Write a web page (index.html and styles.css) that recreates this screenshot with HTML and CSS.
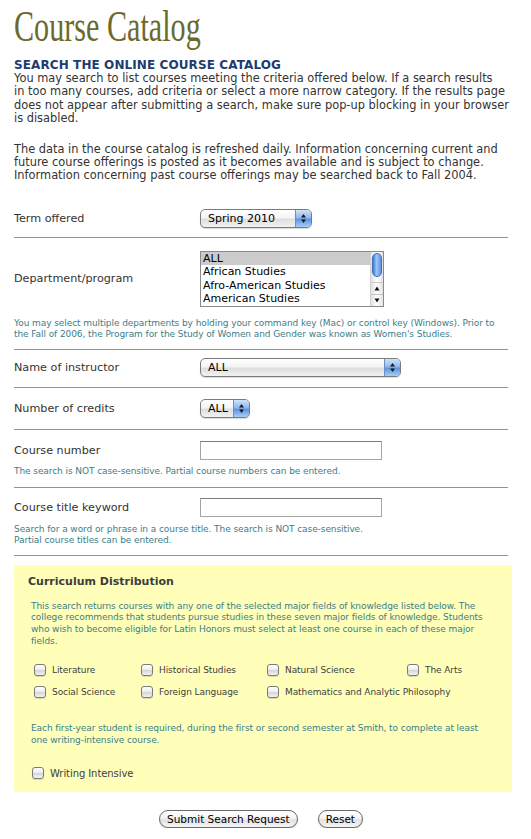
FILE: index.html
```html
<!DOCTYPE html>
<html>
<head>
<meta charset="utf-8">
<title>Course Catalog</title>
<link rel="stylesheet" href="styles.css">
</head>
<body>
<div class="page">
  <h1 class="title">Course Catalog</h1>
  <h2 class="subhead">SEARCH THE ONLINE COURSE CATALOG</h2>
  <p class="intro">You may search to list courses meeting the criteria offered below. If a search results<br>in too many courses, add criteria or select a more narrow category. If the results page<br>does not appear after submitting a search, make sure pop-up blocking in your browser<br>is disabled.</p>
  <p class="intro intro-2">The data in the course catalog is refreshed daily. Information concerning current and<br>future course offerings is posted as it becomes available and is subject to change.<br>Information concerning past course offerings may be searched back to Fall 2004.</p>

  <form class="search">
    <div class="row row-term">
      <label class="label">Term offered</label>
      <span class="popup popup-term">
        <span class="popup-text">Spring 2010</span>
        <span class="popup-cap"><svg width="7" height="11" viewBox="0 0 7 11"><path d="M3.5 1 L6 4.5 H1 Z M3.5 10 L6 6.5 H1 Z" fill="#1a1a1a"/></svg></span>
      </span>
    </div>

    <div class="row row-dept">
      <div class="field">
        <label class="label">Department/program</label>
        <div class="listbox">
          <ul class="options">
            <li class="selected">ALL</li>
            <li>African Studies</li>
            <li>Afro-American Studies</li>
            <li>American Studies</li>
          </ul>
          <div class="scrollbar">
            <span class="thumb"></span>
            <span class="track"></span>
            <span class="arrow"><svg width="6" height="5" viewBox="0 0 6 5"><path d="M3 0.5 L5.5 4.5 H0.5 Z" fill="#111"/></svg></span>
            <span class="arrow"><svg width="6" height="5" viewBox="0 0 6 5"><path d="M3 4.5 L5.5 0.5 H0.5 Z" fill="#111"/></svg></span>
          </div>
        </div>
      </div>
      <p class="note note-dept">You may select multiple departments by holding your command key (Mac) or control key (Windows). Prior to<br>the Fall of 2006, the Program for the Study of Women and Gender was known as Women's Studies.</p>
    </div>

    <div class="row row-instr">
      <label class="label">Name of instructor</label>
      <span class="popup popup-instr">
        <span class="popup-text">ALL</span>
        <span class="popup-cap"><svg width="7" height="11" viewBox="0 0 7 11"><path d="M3.5 1 L6 4.5 H1 Z M3.5 10 L6 6.5 H1 Z" fill="#1a1a1a"/></svg></span>
      </span>
    </div>

    <div class="row row-credits">
      <label class="label">Number of credits</label>
      <span class="popup popup-credits">
        <span class="popup-text">ALL</span>
        <span class="popup-cap"><svg width="7" height="11" viewBox="0 0 7 11"><path d="M3.5 1 L6 4.5 H1 Z M3.5 10 L6 6.5 H1 Z" fill="#1a1a1a"/></svg></span>
      </span>
    </div>

    <div class="row row-num">
      <div class="field">
        <label class="label">Course number</label>
        <input class="textbox" type="text">
      </div>
      <p class="note note-num">The search is NOT case-sensitive. Partial course numbers can be entered.</p>
    </div>

    <div class="row row-kw">
      <div class="field">
        <label class="label">Course title keyword</label>
        <input class="textbox" type="text">
      </div>
      <p class="note note-kw">Search for a word or phrase in a course title. The search is NOT case-sensitive.<br>Partial course titles can be entered.</p>
    </div>

    <div class="distribution">
      <h3 class="dist-title">Curriculum Distribution</h3>
      <p class="note dist-note">This search returns courses with any one of the selected major fields of knowledge listed below. The<br>college recommends that students pursue studies in these seven major fields of knowledge. Students<br>who wish to become eligible for Latin Honors must select at least one course in each of these major<br>fields.</p>
      <div class="fields">
        <label class="check"><input type="checkbox"><span>Literature</span></label>
        <label class="check"><input type="checkbox"><span>Historical Studies</span></label>
        <label class="check"><input type="checkbox"><span>Natural Science</span></label>
        <label class="check"><input type="checkbox"><span>The Arts</span></label>
        <label class="check"><input type="checkbox"><span>Social Science</span></label>
        <label class="check"><input type="checkbox"><span>Foreign Language</span></label>
        <label class="check check-wide"><input type="checkbox"><span>Mathematics and Analytic Philosophy</span></label>
      </div>
      <p class="note dist-note dist-note-2">Each first-year student is required, during the first or second semester at Smith, to complete at least<br>one writing-intensive course.</p>
      <label class="check check-wi"><input type="checkbox"><span>Writing Intensive</span></label>
    </div>

    <div class="buttons">
      <button type="button" class="btn">Submit Search Request</button>
      <button type="reset" class="btn">Reset</button>
    </div>
  </form>
</div>
</body>
</html>
```
FILE: styles.css
```css
html, body {
  margin: 0;
  padding: 0;
  background: #ffffff;
}

body {
  font-family: "DejaVu Sans", Verdana, sans-serif;
  color: #333333;
}

.page {
  padding: 0 23px 0 14px;
}

.title {
  margin: 0;
  padding-top: 2px;
  font-family: "Liberation Serif", "Times New Roman", serif;
  font-weight: normal;
  font-size: 45px;
  line-height: 48px;
  color: #6b6a2c;
  transform: scaleX(0.67);
  transform-origin: left center;
  white-space: nowrap;
}

.subhead {
  margin: 8px 0 0;
  font-size: 12px;
  line-height: 14px;
  font-weight: bold;
  color: #1f3c6e;
  letter-spacing: 0.1px;
}

.intro {
  margin: 0 -12px 0 0;
  font-size: 11.4px;
  line-height: 13.4px;
  color: #333333;
  white-space: nowrap;
}

.intro-2 {
  margin-top: 17px;
}

.search {
  margin-top: 17px;
}

.row {
  border-bottom: 1px solid #c3911e;
  display: grid;
  grid-template-columns: 186px auto;
  align-items: center;
  justify-content: start;
}

.row-dept, .row-num, .row-kw {
  display: block;
}

.field {
  display: grid;
  grid-template-columns: 186px auto;
  align-items: center;
  justify-content: start;
}

.label {
  font-size: 11.2px;
  color: #333333;
}

.row-term { padding: 9px 0 9px; }
.row-dept { padding: 13px 0 8px; }
.row-instr { padding: 8px 0 10px; }
.row-credits { padding: 11px 0 11px; }
.row-num { padding: 11px 0 9px; }
.row-kw { padding: 10px 0 8px; }

/* Aqua-style popup menus */
.popup {
  display: inline-flex;
  height: 17px;
  border: 1px solid #7b7b7b;
  border-radius: 5px;
  overflow: hidden;
  background: linear-gradient(#ffffff 0%, #f4f4f4 45%, #dedede 55%, #f2f2f2 100%);
  box-shadow: 0 1px 1px rgba(0,0,0,0.15);
  font-size: 11px;
  color: #000;
}

.popup-text {
  flex: 1;
  display: flex;
  align-items: center;
  padding-left: 7px;
  white-space: nowrap;
}

.popup-cap {
  width: 15px;
  display: flex;
  align-items: center;
  justify-content: center;
  border-left: 1px solid #6f8fbf;
  background: linear-gradient(#cfe3fb 0%, #8fb8ec 45%, #5c95df 55%, #a8cdf7 100%);
}

.popup-term { width: 110px; }
.popup-instr { width: 199px; }
.popup-credits { width: 48px; }

/* List box */
.listbox {
  width: 182px;
  height: 54px;
  border: 1px solid #8a8a8a;
  display: flex;
  background: #fff;
}

.options {
  list-style: none;
  margin: 0;
  padding: 0;
  flex: 1;
  font-size: 11px;
  color: #000;
}

.options li {
  height: 13.5px;
  line-height: 13.5px;
  padding-left: 2px;
  white-space: nowrap;
}

.options li.selected {
  background: #cbcbcb;
}

.scrollbar {
  width: 12px;
  display: flex;
  flex-direction: column;
  background: linear-gradient(90deg, #e2e2e2, #ffffff 50%, #e2e2e2);
  border-left: 1px solid #d0d0d0;
}

.thumb {
  margin: 1px 1px 0;
  height: 22px;
  flex: none;
  border-radius: 5px;
  border: 1px solid #3f6fb8;
  background: linear-gradient(90deg, #3d7ad7, #9cc6f6 45%, #5b95e2);
}

.track {
  flex: 1;
}

.arrow {
  height: 11px;
  flex: none;
  display: flex;
  align-items: center;
  justify-content: center;
  border-top: 1px solid #c9c9c9;
}

.note {
  margin: 0;
  font-size: 9px;
  letter-spacing: -0.08px;
  line-height: 11.6px;
  color: #3a7e89;
  white-space: nowrap;
}

.note-dept { margin-top: 11px; }
.note-num { margin-top: 6px; }
.note-kw { margin-top: 7px; }

.textbox {
  box-sizing: border-box;
  width: 182px;
  height: 19px;
  margin: 0;
  border: 1px solid #a6a6a6;
  border-top-color: #7c7c7c;
  background: #fff;
  padding: 0 3px;
}

/* Yellow distribution box */
.distribution {
  margin: 9px -4px 0 0;
  background: #ffffb9;
  padding: 10px 14px 13px;
}

.dist-title {
  margin: 0;
  font-size: 11px;
  line-height: 14px;
  font-weight: bold;
  color: #3d3d3d;
}

.dist-note {
  margin: 12px 0 0 3px;
}

.fields {
  margin-top: 17px;
  padding-left: 6px;
  display: grid;
  grid-template-columns: 107px 126px 140px auto;
  row-gap: 10px;
}

.check {
  display: flex;
  align-items: center;
  gap: 6px;
  font-size: 9px;
  letter-spacing: -0.08px;
  color: #404040;
  white-space: nowrap;
}

.check-wide {
  grid-column: span 2;
}

.check input {
  appearance: none;
  -webkit-appearance: none;
  margin: 0;
  width: 12px;
  height: 12px;
  border: 1px solid #7a7a7a;
  border-radius: 3px;
  background: linear-gradient(#ffffff, #ececec 50%, #d6d6d6 55%, #f3f3f3);
  box-shadow: 0 1px 1px rgba(0,0,0,0.15);
}

.dist-note-2 {
  margin-top: 25px;
}

.check-wi {
  margin-top: 21px;
  padding-left: 4px;
  font-size: 10px;
}

.buttons {
  display: flex;
  justify-content: center;
  gap: 20px;
  padding: 18px 0 0;
}

.btn {
  font-family: "DejaVu Sans", "Lucida Grande", sans-serif;
  font-size: 10.5px;
  color: #000;
  height: 18px;
  padding: 0 7px;
  border: 1px solid #6a6a6a;
  border-radius: 9px;
  background: linear-gradient(#ffffff 0%, #f5f5f5 45%, #e1e1e1 55%, #f6f6f6 100%);
  box-shadow: 0 1px 1px rgba(0,0,0,0.2);
  line-height: 16px;
}
```
